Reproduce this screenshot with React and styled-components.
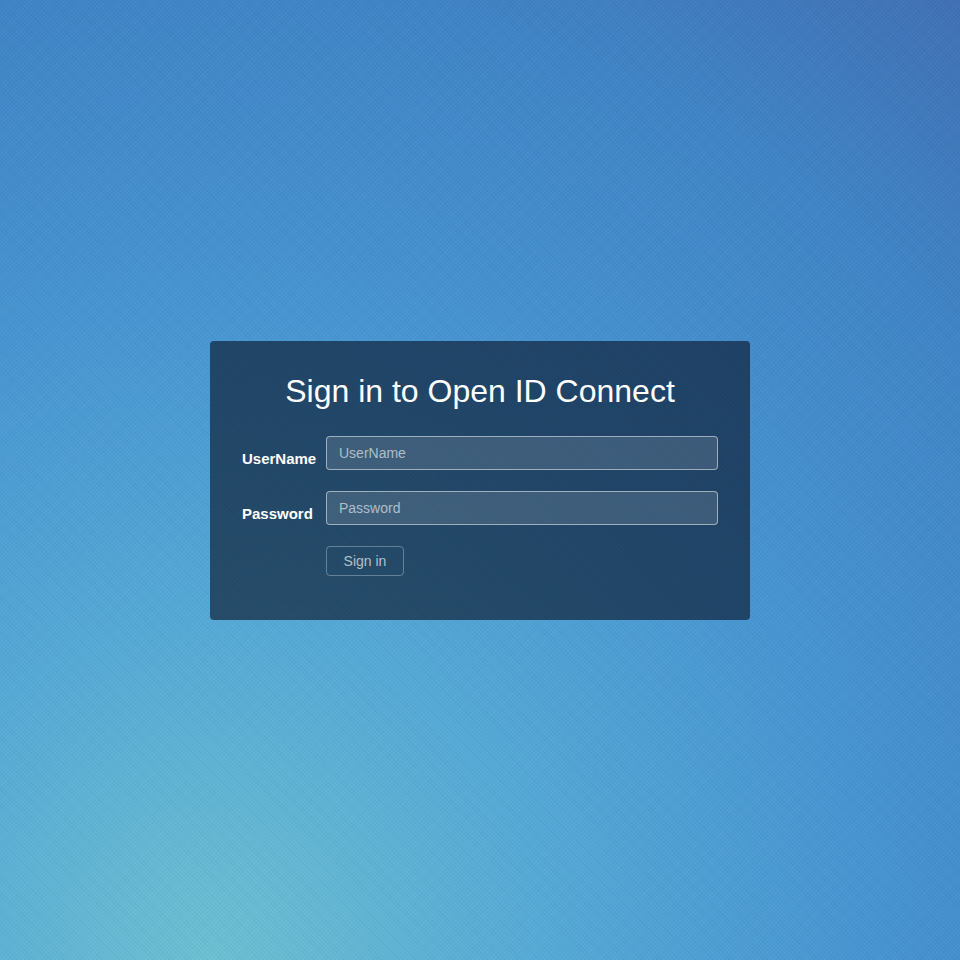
import styled, { createGlobalStyle } from "styled-components";

const GlobalStyle = createGlobalStyle`
  html, body {
    margin: 0;
    padding: 0;
    height: 100%;
  }
  body {
    font-family: "Liberation Sans", Arial, sans-serif;
  }
  #root {
    height: 100%;
  }
`;

const Page = styled.div`
  min-height: 960px;
  display: flex;
  align-items: center;
  justify-content: center;
  background:
    repeating-linear-gradient(45deg, rgba(0, 0, 0, 0.035) 0 1px, transparent 1px 3px),
    repeating-linear-gradient(-45deg, rgba(255, 255, 255, 0.03) 0 1px, transparent 1px 3px),
    radial-gradient(circle 1300px at 210px 960px, #6cc0d2 0%, #56aad6 25%, #4795d2 50%, #3f84c6 75%, #4070b5 94%);
`;

const Card = styled.div`
  width: 540px;
  box-sizing: border-box;
  padding: 28px 32px 44px;
  border-radius: 4px;
  background: rgba(8, 20, 38, 0.62);
  color: #fff;
`;

const Title = styled.h1`
  margin: 0 0 23px;
  font-size: 32px;
  line-height: 44px;
  font-weight: normal;
  text-align: center;
`;

const Form = styled.form`
  display: grid;
  grid-template-columns: 84px 1fr;
  row-gap: 21px;
  align-items: center;
`;

const Label = styled.label`
  font-size: 15px;
  font-weight: bold;
  padding-top: 11px;
`;

const Input = styled.input`
  height: 34px;
  box-sizing: border-box;
  padding: 0 12px;
  border: 1px solid rgba(255, 255, 255, 0.5);
  border-radius: 4px;
  background: rgba(255, 255, 255, 0.13);
  color: #fff;
  font-family: inherit;
  font-size: 14px;
  outline: none;
  &::placeholder {
    color: rgba(220, 228, 236, 0.72);
  }
`;

const Button = styled.button`
  grid-column: 2;
  justify-self: start;
  width: 78px;
  height: 30px;
  border: 1px solid rgba(255, 255, 255, 0.3);
  border-radius: 4px;
  background: transparent;
  color: rgba(220, 228, 236, 0.78);
  font-family: inherit;
  font-size: 14px;
  cursor: pointer;
`;

function App() {
  return (
    <Page>
      <GlobalStyle />
      <Card>
        <Title>Sign in to Open ID Connect</Title>
        <Form onSubmit={(e) => e.preventDefault()}>
          <Label htmlFor="username">UserName</Label>
          <Input id="username" placeholder="UserName" />
          <Label htmlFor="password">Password</Label>
          <Input id="password" type="password" placeholder="Password" />
          <Button type="submit">Sign in</Button>
        </Form>
      </Card>
    </Page>
  );
}

export default App;
